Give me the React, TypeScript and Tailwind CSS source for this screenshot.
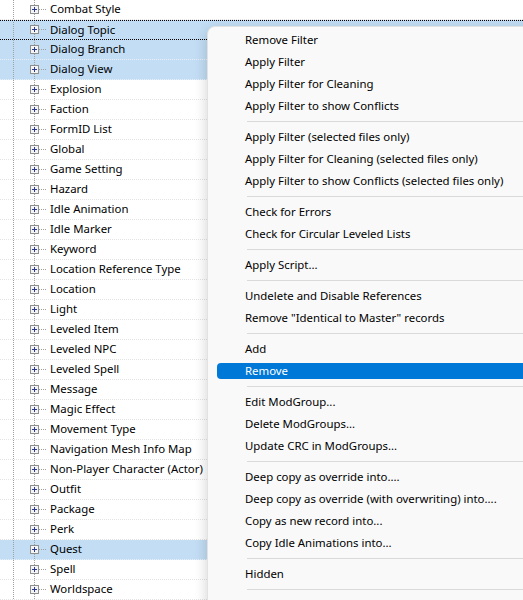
import React from "react";

const records = [
  "Combat Style",
  "Dialog Topic",
  "Dialog Branch",
  "Dialog View",
  "Explosion",
  "Faction",
  "FormID List",
  "Global",
  "Game Setting",
  "Hazard",
  "Idle Animation",
  "Idle Marker",
  "Keyword",
  "Location Reference Type",
  "Location",
  "Light",
  "Leveled Item",
  "Leveled NPC",
  "Leveled Spell",
  "Message",
  "Magic Effect",
  "Movement Type",
  "Navigation Mesh Info Map",
  "Non-Player Character (Actor)",
  "Outfit",
  "Package",
  "Perk",
  "Quest",
  "Spell",
  "Worldspace",
];

const selected = new Set(["Dialog Topic", "Dialog Branch", "Dialog View", "Quest"]);

// null = separator
const menu: (string | null)[] = [
  "Remove Filter",
  "Apply Filter",
  "Apply Filter for Cleaning",
  "Apply Filter to show Conflicts",
  null,
  "Apply Filter (selected files only)",
  "Apply Filter for Cleaning (selected files only)",
  "Apply Filter to show Conflicts (selected files only)",
  null,
  "Check for Errors",
  "Check for Circular Leveled Lists",
  null,
  "Apply Script...",
  null,
  "Undelete and Disable References",
  'Remove "Identical to Master" records',
  null,
  "Add",
  "Remove",
  null,
  "Edit ModGroup...",
  "Delete ModGroups...",
  "Update CRC in ModGroups...",
  null,
  "Deep copy as override into....",
  "Deep copy as override (with overwriting) into....",
  "Copy as new record into...",
  "Copy Idle Animations into...",
  null,
  "Hidden",
  null,
];

function TreeGuide() {
  return (
    <svg width="46" height="20" viewBox="0 0 46 20" className="shrink-0">
      <line x1="13.5" y1="0" x2="13.5" y2="20" stroke="#a0a0a0" strokeDasharray="1 1" />
      <line x1="34.5" y1="0" x2="34.5" y2="5" stroke="#a0a0a0" strokeDasharray="1 1" />
      <line x1="34.5" y1="14" x2="34.5" y2="20" stroke="#a0a0a0" strokeDasharray="1 1" />
      <line x1="39" y1="9.5" x2="46" y2="9.5" stroke="#a0a0a0" strokeDasharray="1 1" />
      <rect x="30.5" y="5.5" width="8" height="8" fill="#f4f4f4" stroke="#8e8f8f" />
      <line x1="32" y1="9.5" x2="37" y2="9.5" stroke="#2a3a8c" />
      <line x1="34.5" y1="7" x2="34.5" y2="12" stroke="#2a3a8c" />
    </svg>
  );
}

export default function App() {
  return (
    <div
      className="relative w-[523px] h-[600px] overflow-hidden bg-white text-[11.4px] text-black"
      style={{ fontFamily: '"Noto Sans", "Segoe UI", sans-serif' }}
    >
      {/* Record tree */}
      <div className="flex flex-col">
        {records.map((name) => {
          const isSel = selected.has(name);
          const focused = name === "Dialog Topic";
          return (
            <div
              key={name}
              className={[
                "flex items-center h-5 overflow-hidden",
                isSel ? "bg-[#c2ddf4]" : "bg-white",
                focused
                  ? "border-y border-dotted border-black"
                  : isSel
                  ? "border-b border-dotted border-[#e8f1fa]"
                  : "border-b border-dotted border-[#e3e3e3]",
              ].join(" ")}
            >
              <TreeGuide />
              <span className="ml-[4px] -mt-px whitespace-nowrap leading-none">{name}</span>
            </div>
          );
        })}
      </div>

      {/* Context menu */}
      <div className="absolute left-[207px] top-[26px] w-[340px] pt-[2px] pb-6 bg-[#f9f9f9] rounded-lg border border-[#e2e2e2] shadow-[0_4px_14px_rgba(0,0,0,0.18)]">
        {menu.map((item, i) =>
          item === null ? (
            <div key={i} className="h-[9px] flex items-center pl-[39px]">
              <div className="h-px w-full bg-[#dadada]" />
            </div>
          ) : (
            <div key={i} className="h-[22px] flex items-center">
              <div
                className={[
                  "flex items-center h-4 w-full ml-[9px] pl-[28px] rounded-l-[4px] whitespace-nowrap",
                  item === "Remove" ? "bg-[#0078d7] text-white" : "",
                ].join(" ")}
              >
                <span className="-mt-px">{item}</span>
              </div>
            </div>
          )
        )}
      </div>
    </div>
  );
}
